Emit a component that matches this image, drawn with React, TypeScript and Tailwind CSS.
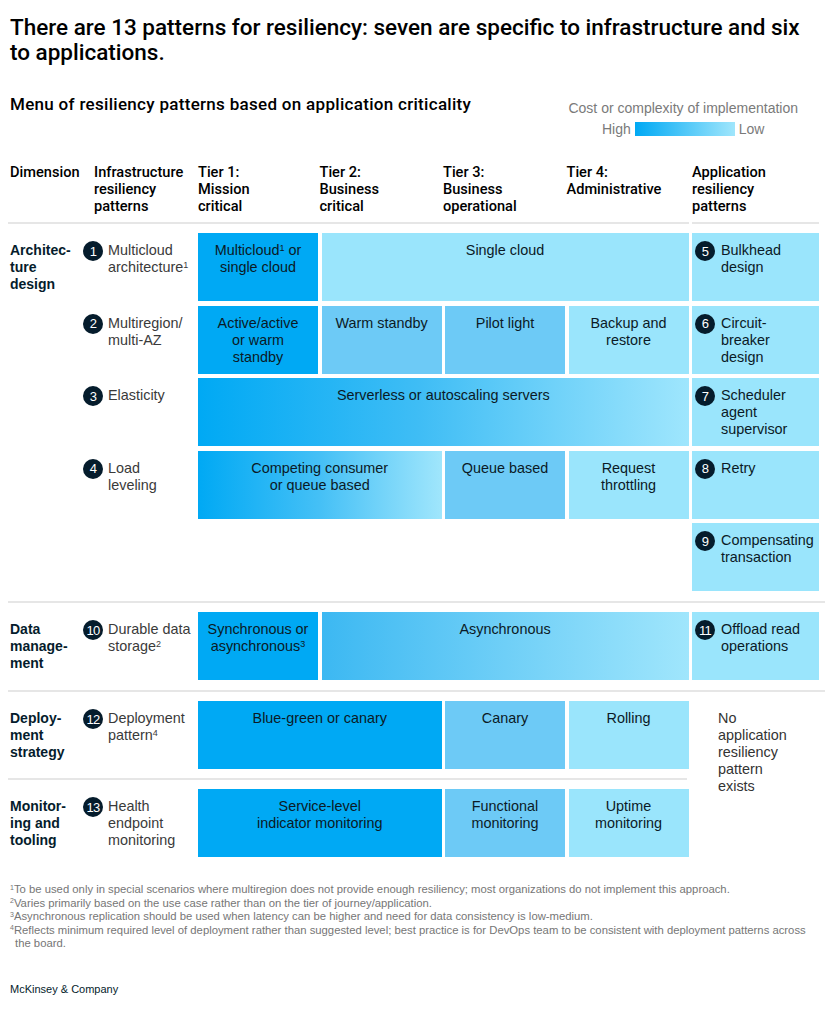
import React from 'react'

const body = "font-['Liberation_Sans',Arial,sans-serif]"
const head = "font-['Roboto',Arial,sans-serif]"

const tones: Record<string, string> = {
  dark: 'bg-[#00a9f4]',
  mid: 'bg-[#6dcaf6]',
  light: 'bg-[#9ae5fc]',
  grad: 'bg-[linear-gradient(to_right,#00a9f4_0%,#3fbdf5_45%,#9fe6fd_100%)]',
  grad2: 'bg-[linear-gradient(to_right,#00a9f4_0%,#45c0f6_50%,#a0e6fc_100%)]',
  grad3: 'bg-[linear-gradient(to_right,#3cb8f2_0%,#6fcff7_50%,#a0e6fc_100%)]',
}

const spans: Record<number, string> = {
  1: 'col-span-1',
  2: 'col-span-2',
  3: 'col-span-3',
  4: 'col-span-4',
}

const gridCols = 'grid grid-cols-[69.5px_111.5px_120px_120px_120px_120px_127px] gap-x-[3.5px]'

function Num({ n }: { n: number }) {
  return (
    <span className="flex h-[20px] w-[20px] shrink-0 items-center justify-center rounded-full bg-[#051c2c] text-[13px] leading-none tracking-[-0.06em] text-white">
      {n}
    </span>
  )
}

function Cell({ tone, span = 1, children }: { tone: string; span?: number; children: React.ReactNode }) {
  return (
    <div className={`${tones[tone]} ${spans[span]} h-[68px] pt-[9px] text-center text-[14.4px] leading-[17px] text-[#0b1a26]`}>
      {children}
    </div>
  )
}

function Dim({ children }: { children: React.ReactNode }) {
  return <div className="pt-[9px] text-[14px] font-bold leading-[17px] text-[#051c2c]">{children}</div>
}

function Infra({ n, children }: { n: number; children: React.ReactNode }) {
  return (
    <div className="flex gap-[5px] pt-[8px]">
      <Num n={n} />
      <div className="pt-[1px] text-[14.4px] leading-[17px] text-[#3a3a3a]">{children}</div>
    </div>
  )
}

function App({ n, children }: { n: number; children: React.ReactNode }) {
  return (
    <div className="flex h-[68px] gap-[6px] bg-[#9ae5fc] pl-[3px] pt-[8px]">
      <Num n={n} />
      <div className="pt-[1px] text-[14.4px] leading-[17px] text-[#0b1a26]">{children}</div>
    </div>
  )
}

function Line({ split }: { split?: boolean }) {
  if (split) {
    return (
      <div className={gridCols}>
        <div className="col-span-6 -ml-[2px] h-[2px] bg-[#e6e6e6]" />
        <div className="h-[2px] bg-[#e6e6e6]" />
      </div>
    )
  }
  return <div className="-ml-[2px] mr-[3px] h-[2px] bg-[#e6e6e6]" />
}

export default function Page() {
  return (
    <div className={`${body} min-h-[1011px] w-[838px] bg-white px-[10px] pt-[15px] text-[#051c2c]`}>
      <h1 className={`${head} text-[22.5px] font-medium leading-[25px] text-black`}>
        There are 13 patterns for resiliency: seven are specific to infrastructure and six
        <br />
        to applications.
      </h1>

      <div className="mt-[29px] flex items-start justify-between">
        <div className={`${head} text-[17px] font-medium leading-[20px] tracking-[0.3px] text-black`}>
          Menu of resiliency patterns based on application criticality
        </div>
        <div className="mr-[30px] mt-[5px] flex flex-col items-center text-[14px] leading-[18px] text-[#7a7a7a]">
          <div>Cost or complexity of implementation</div>
          <div className="mt-[3px] flex items-center gap-[4px]">
            <span>High</span>
            <span className="h-[14px] w-[100px] bg-[linear-gradient(to_right,#00a9f4,#a0e6fc)]" />
            <span>Low</span>
          </div>
        </div>
      </div>

      <div className={`${gridCols} ${head} mt-[26px] text-[14.6px] font-medium leading-[17px] text-black`}>
        <div>Dimension</div>
        <div className="pl-[11px]">
          Infrastructure
          <br />
          resiliency
          <br />
          patterns
        </div>
        <div>
          Tier 1:
          <br />
          Mission
          <br />
          critical
        </div>
        <div className="-ml-[2px]">
          Tier 2:
          <br />
          Business
          <br />
          critical
        </div>
        <div className="-ml-[2px]">
          Tier 3:
          <br />
          Business
          <br />
          operational
        </div>
        <div className="-ml-[2px]">
          Tier 4:
          <br />
          Administrative
        </div>
        <div>
          Application
          <br />
          resiliency
          <br />
          patterns
        </div>
      </div>
      <div className="mb-[9px] mt-[7px]">
        <Line split />
      </div>

      {/* Architecture design */}
      <div className="flex flex-col gap-[4.5px]">
        <div className={gridCols}>
          <Dim>
            Architec-
            <br />
            ture
            <br />
            design
          </Dim>
          <Infra n={1}>
            Multicloud
            <br />
            architecture<sup className="text-[9px]">1</sup>
          </Infra>
          <Cell tone="dark">
            Multicloud<sup className="text-[9px]">1</sup> or
            <br />
            single cloud
          </Cell>
          <Cell tone="light" span={3}>
            Single cloud
          </Cell>
          <App n={5}>
            Bulkhead
            <br />
            design
          </App>
        </div>
        <div className={gridCols}>
          <div />
          <Infra n={2}>
            Multiregion/
            <br />
            multi-AZ
          </Infra>
          <Cell tone="dark">
            Active/active
            <br />
            or warm
            <br />
            standby
          </Cell>
          <Cell tone="mid">Warm standby</Cell>
          <Cell tone="mid">Pilot light</Cell>
          <Cell tone="light">
            Backup and
            <br />
            restore
          </Cell>
          <App n={6}>
            Circuit-
            <br />
            breaker
            <br />
            design
          </App>
        </div>
        <div className={gridCols}>
          <div />
          <Infra n={3}>Elasticity</Infra>
          <Cell tone="grad" span={4}>
            Serverless or autoscaling servers
          </Cell>
          <App n={7}>
            Scheduler
            <br />
            agent
            <br />
            supervisor
          </App>
        </div>
        <div className={gridCols}>
          <div />
          <Infra n={4}>
            Load
            <br />
            leveling
          </Infra>
          <Cell tone="grad2" span={2}>
            Competing consumer
            <br />
            or queue based
          </Cell>
          <Cell tone="mid">Queue based</Cell>
          <Cell tone="light">
            Request
            <br />
            throttling
          </Cell>
          <App n={8}>Retry</App>
        </div>
        <div className={gridCols}>
          <div className="col-span-6" />
          <App n={9}>
            Compensating
            <br />
            transaction
          </App>
        </div>
      </div>

      <div className="mb-[9px] mt-[10px]">
        <Line />
      </div>

      {/* Data management */}
      <div className={gridCols}>
        <Dim>
          Data
          <br />
          manage-
          <br />
          ment
        </Dim>
        <Infra n={10}>
          Durable data
          <br />
          storage<sup className="text-[9px]">2</sup>
        </Infra>
        <Cell tone="dark">
          Synchronous or
          <br />
          asynchronous<sup className="text-[9px]">3</sup>
        </Cell>
        <Cell tone="grad3" span={3}>
          Asynchronous
        </Cell>
        <App n={11}>
          Offload read
          <br />
          operations
        </App>
      </div>

      <div className="mb-[9px] mt-[10px]">
        <Line />
      </div>

      {/* Deployment + monitoring */}
      <div className={`${gridCols} grid-rows-[68px_20px_68px]`}>
        <Dim>
          Deploy-
          <br />
          ment
          <br />
          strategy
        </Dim>
        <Infra n={12}>
          Deployment
          <br />
          pattern<sup className="text-[9px]">4</sup>
        </Infra>
        <Cell tone="dark" span={2}>
          Blue-green or canary
        </Cell>
        <Cell tone="mid">Canary</Cell>
        <Cell tone="light">Rolling</Cell>
        <div className="col-start-7 row-span-3 row-start-1 pl-[26px] pt-[9px] text-[14.4px] leading-[17px] text-[#333]">
          No
          <br />
          application
          <br />
          resiliency
          <br />
          pattern
          <br />
          exists
        </div>

        <div className="col-span-6 col-start-1 row-start-2 flex items-center">
          <div className="-ml-[2px] h-[2px] w-full bg-[#e6e6e6]" />
        </div>

        <div className="col-start-1 row-start-3">
          <Dim>
            Monitor-
            <br />
            ing and
            <br />
            tooling
          </Dim>
        </div>
        <div className="col-start-2 row-start-3">
          <Infra n={13}>
            Health
            <br />
            endpoint
            <br />
            monitoring
          </Infra>
        </div>
        <div className="col-span-2 col-start-3 row-start-3">
          <Cell tone="dark">
            Service-level
            <br />
            indicator monitoring
          </Cell>
        </div>
        <div className="col-start-5 row-start-3">
          <Cell tone="mid">
            Functional
            <br />
            monitoring
          </Cell>
        </div>
        <div className="col-start-6 row-start-3">
          <Cell tone="light">
            Uptime
            <br />
            monitoring
          </Cell>
        </div>
      </div>

      <div className="mt-[26px] pr-[14px] text-[11.3px] leading-[13.5px] text-[#767676]">
        <p>
          <sup className="text-[7px]">1</sup>To be used only in special scenarios where multiregion does not provide enough resiliency; most organizations do not implement this approach.
        </p>
        <p>
          <sup className="text-[7px]">2</sup>Varies primarily based on the use case rather than on the tier of journey/application.
        </p>
        <p>
          <sup className="text-[7px]">3</sup>Asynchronous replication should be used when latency can be higher and need for data consistency is low-medium.
        </p>
        <p className="pl-[5px] -indent-[5px]">
          <sup className="text-[7px]">4</sup>Reflects minimum required level of deployment rather than suggested level; best practice is for DevOps team to be consistent with deployment patterns across the board.
        </p>
      </div>

      <div className="mt-[31px] text-[11px] leading-[14px] text-[#051c2c]">McKinsey &amp; Company</div>
    </div>
  )
}
